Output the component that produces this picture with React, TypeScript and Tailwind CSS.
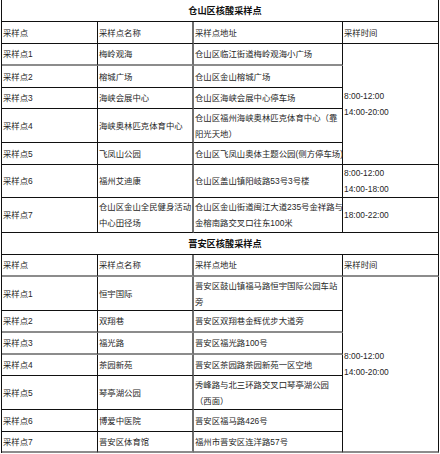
type Row = { id: string; name: string; addr: string; h: number; gray?: boolean };

const cangshan: Row[] = [
  { id: '采样点1', name: '梅岭观海', addr: '仓山区临江街道梅岭观海小广场', h: 22, gray: true },
  { id: '采样点2', name: '榕城广场', addr: '仓山区金山榕城广场', h: 22 },
  { id: '采样点3', name: '海峡会展中心', addr: '仓山区海峡会展中心停车场', h: 21 },
  { id: '采样点4', name: '海峡奥林匹克体育中心', addr: '仓山区福州海峡奥林匹克体育中心（靠\n阳光天地）', h: 34 },
  { id: '采样点5', name: '飞凤山公园', addr: '仓山区飞凤山奥体主题公园(侧方停车场)', h: 22 },
  { id: '采样点6', name: '福州艾迪康', addr: '仓山区盖山镇阳岐路53号3号楼', h: 33 },
  { id: '采样点7', name: '仓山区金山全民健身活动\n中心田径场', addr: '仓山区金山街道闽江大道235号金祥路与\n金榕南路交叉口往东100米', h: 35 },
];

const jinan: Row[] = [
  { id: '采样点1', name: '恒宇国际', addr: '晋安区鼓山镇福马路恒宇国际公园车站\n旁', h: 34 },
  { id: '采样点2', name: '双翔巷', addr: '晋安区双翔巷金辉优步大道旁', h: 22, gray: true },
  { id: '采样点3', name: '福光路', addr: '晋安区福光路100号', h: 22, gray: true },
  { id: '采样点4', name: '茶园新苑', addr: '晋安区茶园路茶园新苑一区空地', h: 21 },
  { id: '采样点5', name: '琴亭湖公园', addr: '秀峰路与北三环路交叉口琴亭湖公园\n（西面）', h: 34 },
  { id: '采样点6', name: '博爱中医院', addr: '晋安区福马路426号', h: 22 },
  { id: '采样点7', name: '晋安区体育馆', addr: '福州市晋安区连洋路57号', h: 21, gray: true },
];

function Cell({ children, gray, mid, className = '' }: { children?: React.ReactNode; gray?: boolean; mid?: boolean; className?: string }) {
  const bottom = gray ? 'border-b-2 border-b-[#8c8c8c]' : 'border-b border-b-[#111]';
  const right = mid ? 'border-r-2 border-r-[#6f6f6f]' : 'border-r border-r-[#111]';
  return (
    <div className={`flex items-center pl-[1px] whitespace-pre ${bottom} ${right} ${className}`}>
      <span>{children}</span>
    </div>
  );
}

function Block({
  title,
  rows,
  headerGray,
  times,
}: {
  title: string;
  rows: Row[];
  headerGray?: boolean;
  times: { text: string; start: number; span: number }[];
}) {
  const heights = ['22px', '22px', ...rows.map((r) => r.h + 'px')].join(' ');
  return (
    <div
      className="ml-[1px] w-[438px] grid grid-cols-[96px_96px_149px_96px] border-l border-l-[#111]"
      style={{ gridTemplateRows: heights }}
    >
      <div className="col-span-4 flex items-center justify-center pl-[10px] font-bold text-[9.2px] text-[#111] border-r border-b border-[#111]">
        {title}
      </div>
      <Cell gray={headerGray}>采样点</Cell>
      <Cell gray={headerGray} mid>采样点名称</Cell>
      <Cell gray={headerGray}>采样点地址</Cell>
      <Cell gray={headerGray}>采样时间</Cell>
      {rows.map((r, i) => {
        const cells = [
          <Cell key={`a${i}`} gray={r.gray}>{r.id}</Cell>,
          <Cell key={`b${i}`} gray={r.gray} mid>{r.name}</Cell>,
          <Cell key={`c${i}`} gray={r.gray}>{r.addr}</Cell>,
        ];
        const t = times.find((x) => x.start === i);
        if (t) {
          const last = rows[t.start + t.span - 1];
          cells.push(
            <Cell
              key={`d${i}`}
              gray={last.gray}
              className={t.span === 5 ? 'row-span-5' : t.span === 7 ? 'row-span-7' : 'row-span-1'}
            >
              {t.text}
            </Cell>
          );
        }
        return cells;
      })}
    </div>
  );
}

export default function App() {
  return (
    <div className="w-[440px] h-[454px] overflow-hidden bg-white text-[#262626] text-[8.4px] leading-[16px] font-['Liberation_Sans','Noto_Sans_CJK_SC',sans-serif]">
      <Block
        title="仓山区核酸采样点"
        rows={cangshan}
        times={[
          { text: '8:00-12:00\n14:00-20:00', start: 0, span: 5 },
          { text: '8:00-12:00\n14:00-18:00', start: 5, span: 1 },
          { text: '18:00-22:00', start: 6, span: 1 },
        ]}
      />
      <Block
        title="晋安区核酸采样点"
        rows={jinan}
        headerGray
        times={[{ text: '8:00-12:00\n14:00-20:00', start: 0, span: 7 }]}
      />
    </div>
  );
}
